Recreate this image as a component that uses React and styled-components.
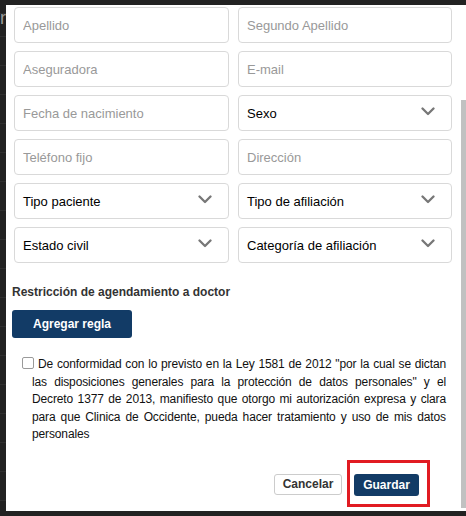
import React from "react";
import styled, { createGlobalStyle } from "styled-components";

const Global = createGlobalStyle`
  html, body { margin: 0; padding: 0; }
  body {
    width: 466px;
    height: 516px;
    overflow: hidden;
    background-color: #222;
    font-family: "Liberation Sans", Arial, sans-serif;
  }
  * { box-sizing: border-box; }
`;

const Page = styled.div`
  display: flex;
  height: 516px;
  background: repeating-linear-gradient(
    to bottom,
    transparent 0px,
    transparent 8px,
    #2f2f2f 8px,
    #2f2f2f 9px,
    transparent 9px,
    transparent 29px
  );
  background-position: 0 28px;
`;

const Strip = styled.div`
  width: 6px;
  flex: none;
  overflow: hidden;
  padding-top: 8px;
  color: #9a9a9a;
  font-size: 18px;
  line-height: 20px;
  text-align: right;
  white-space: nowrap;
  direction: rtl;
`;

const Panel = styled.div`
  position: relative;
  flex: 1;
  margin-top: 5px;
  height: 506px;
  background: #fff;
  padding: 2px 14px 0 6px;
  display: flex;
  flex-direction: column;
`;

const Thumb = styled.div`
  position: absolute;
  right: 0;
  top: 95px;
  width: 5px;
  height: 408px;
  background: #c1c1c1;
`;

const FieldGrid = styled.div`
  margin-left: 2px;
  display: grid;
  grid-template-columns: 215px 214px;
  column-gap: 9px;
  row-gap: 8px;
`;

const TextInput = styled.input`
  height: 36px;
  width: 100%;
  border: 1px solid #d9d9d9;
  border-radius: 4px;
  padding: 0 8px;
  font-family: "Liberation Sans", Arial, sans-serif;
  font-size: 13px;
  color: #333;
  background: #fff;
  outline: none;
  &::placeholder { color: #999; }
`;

const SelectBox = styled.div`
  height: 36px;
  border: 1px solid #d9d9d9;
  border-radius: 4px;
  padding: 0 16px 0 8px;
  display: flex;
  align-items: center;
  justify-content: space-between;
  font-size: 13px;
  color: #000;
  background: #fff;
`;

const Chevron = () => (
  <svg width="14" height="9" viewBox="0 0 14 9" style={{ marginTop: -3 }}>
    <polyline points="1.5,1.5 7,7 12.5,1.5" fill="none" stroke="#777" strokeWidth="2.3" strokeLinecap="round" strokeLinejoin="round" />
  </svg>
);

const SectionLabel = styled.div`
  margin-top: 22px;
  font-size: 12px;
  line-height: 15px;
  font-weight: bold;
  color: #333;
`;

const PrimaryButton = styled.button`
  width: ${(p) => p.$w}px;
  height: ${(p) => p.$h}px;
  border: none;
  border-radius: 3px;
  background: #123b66;
  color: #fff;
  font-family: "Liberation Sans", Arial, sans-serif;
  font-size: 12px;
  font-weight: bold;
  padding: 0;
  cursor: pointer;
`;

const AddRule = styled(PrimaryButton)`
  margin-top: 10px;
`;

const Consent = styled.p`
  margin: 18px 6px 0 20px;
  font-size: 12px;
  line-height: 17.5px;
  letter-spacing: -0.13px;
  color: #111;
  text-align: justify;
`;

const Check = styled.input`
  appearance: none;
  width: 12px;
  height: 12px;
  margin: 0 4px 0 -10px;
  border: 1px solid #9a9a9a;
  border-radius: 2px;
  background: #fff;
  vertical-align: -1px;
`;

const Footer = styled.div`
  margin-top: 30px;
  margin-right: 33px;
  display: flex;
  justify-content: flex-end;
  align-items: flex-start;
  gap: 12px;
`;

const SecondaryButton = styled.button`
  width: 68px;
  height: 21px;
  border: 1px solid #ccc;
  border-radius: 3px;
  background: #fff;
  color: #333;
  font-family: "Liberation Sans", Arial, sans-serif;
  font-size: 12px;
  font-weight: bold;
  padding: 0;
`;

const Highlight = styled.div`
  position: relative;
`;

const RedFrame = styled.div`
  position: absolute;
  top: -14px;
  left: -7px;
  right: -11px;
  bottom: -11px;
  border: 3px solid #e11b22;
  pointer-events: none;
`;

const fields = [
  { t: "input", l: "Apellido" },
  { t: "input", l: "Segundo Apellido" },
  { t: "input", l: "Aseguradora" },
  { t: "input", l: "E-mail" },
  { t: "input", l: "Fecha de nacimiento" },
  { t: "select", l: "Sexo" },
  { t: "input", l: "Teléfono fijo" },
  { t: "input", l: "Dirección" },
  { t: "select", l: "Tipo paciente" },
  { t: "select", l: "Tipo de afiliación" },
  { t: "select", l: "Estado civil" },
  { t: "select", l: "Categoría de afiliación" },
];

export default function App() {
  return (
    <>
      <Global />
      <Page>
        <Strip>r</Strip>
        <Panel>
          <FieldGrid>
            {fields.map((f) =>
              f.t === "input" ? (
                <TextInput key={f.l} placeholder={f.l} />
              ) : (
                <SelectBox key={f.l}>
                  <span>{f.l}</span>
                  <Chevron />
                </SelectBox>
              )
            )}
          </FieldGrid>
          <SectionLabel>Restricción de agendamiento a doctor</SectionLabel>
          <div>
            <AddRule $w={120} $h={28}>Agregar regla</AddRule>
          </div>
          <Consent>
            <Check type="checkbox" />
            De conformidad con lo previsto en la Ley 1581 de 2012 "por la cual se dictan las disposiciones generales para la protección de datos personales" y el Decreto 1377 de 2013, manifiesto que otorgo mi autorización expresa y clara para que Clinica de Occidente, pueda hacer tratamiento y uso de mis datos personales
          </Consent>
          <Footer>
            <SecondaryButton>Cancelar</SecondaryButton>
            <Highlight>
              <PrimaryButton $w={65} $h={22}>Guardar</PrimaryButton>
              <RedFrame />
            </Highlight>
          </Footer>
          <Thumb />
        </Panel>
      </Page>
    </>
  );
}
